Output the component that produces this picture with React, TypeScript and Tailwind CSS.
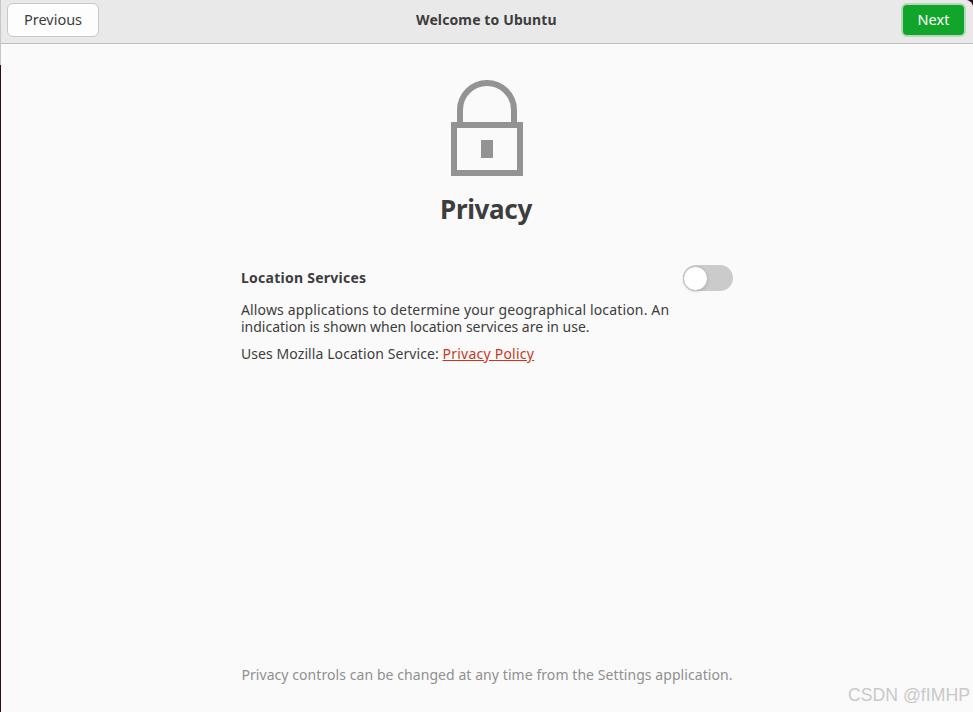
export default function App() {
  return (
    <div className="relative flex h-[712px] w-[973px] overflow-hidden bg-[#2c0a24] font-['Noto_Sans',sans-serif] text-[#3d3d3d]">
      <div className="absolute left-0 top-0 h-[65px] w-px bg-[#c6c6c6]" />
      <div className="ml-px flex h-full flex-1 flex-col rounded-tr-[8px] bg-[#fafafa]">
        <header className="relative flex h-[44px] items-start justify-between rounded-tr-[8px] border-b border-[#bdbdbd] bg-[#e9e9e9] pl-[6px] pr-[7px] pt-[3px]">
          <button className="flex h-[34px] w-[92px] items-center justify-center rounded-[6px] border border-[#cdc7c2] bg-[#fdfdfd] text-[14.5px] text-[#3d3d3d]">
            Previous
          </button>
          <div className="absolute left-[415px] top-0 flex h-[39px] items-center text-[14px] font-bold leading-none tracking-[0.12px] text-[#3d3d3d]">
            Welcome to Ubuntu
          </div>
          <button className="flex h-[34px] w-[65px] items-center justify-center rounded-[6px] border-2 border-[#b3d9b8] bg-[#12a52c] text-[14.5px] text-white">
            Next
          </button>
        </header>

        <main className="flex flex-1 flex-col items-center">
          <svg className="mt-[36px] h-[96px] w-[72px]" viewBox="0 0 72 96" fill="none">
            <path d="M9 44 V30 A27 27 0 0 1 63 30 V44" stroke="#939393" strokeWidth="6" />
            <rect x="3" y="45" width="66" height="48" stroke="#939393" strokeWidth="6" />
            <rect x="30" y="60" width="12" height="18" fill="#939393" />
          </svg>
          <h1 className="mr-[2px] mt-[11px] text-[26px] font-bold leading-[44px] tracking-[-0.35px] text-[#3d3d3d]">
            Privacy
          </h1>

          <section className="mt-[33px] w-[492px]">
            <div className="flex h-[26px] items-center justify-between">
              <span className="text-[14px] font-bold tracking-[0.25px]">Location Services</span>
              <span className="mt-[2px] flex h-[26px] w-[50px] items-center rounded-full bg-[#cbcbcb]">
                <span className="h-[25px] w-[25px] rounded-full border border-[#bcbcbc] bg-white shadow-sm" />
              </span>
            </div>
            <p className="mt-[11px] w-[440px] text-[14px] leading-[17px]">
              <span className="block tracking-[0.15px]">Allows applications to determine your geographical location. An</span>
              <span className="block tracking-[-0.01px]">indication is shown when location services are in use.</span>
            </p>
            <p className="mt-[10px] text-[14px] leading-[17px] tracking-[0.08px]">
              Uses Mozilla Location Service:{" "}
              <a className="tracking-[0.23px] text-[#c7381a] underline" href="#">Privacy Policy</a>
            </p>
          </section>

          <div className="flex-1" />
          <p className="mb-[28px] text-[14px] leading-[19px] tracking-[0.07px] text-[#909090]">
            Privacy controls can be changed at any time from the Settings application.
          </p>
        </main>
      </div>
      <div className="absolute bottom-[5px] right-[3px] font-['Liberation_Sans',sans-serif] text-[17.7px] leading-[24px] text-[#c9c9c9]">
        CSDN @fIMHP
      </div>
    </div>
  );
}
